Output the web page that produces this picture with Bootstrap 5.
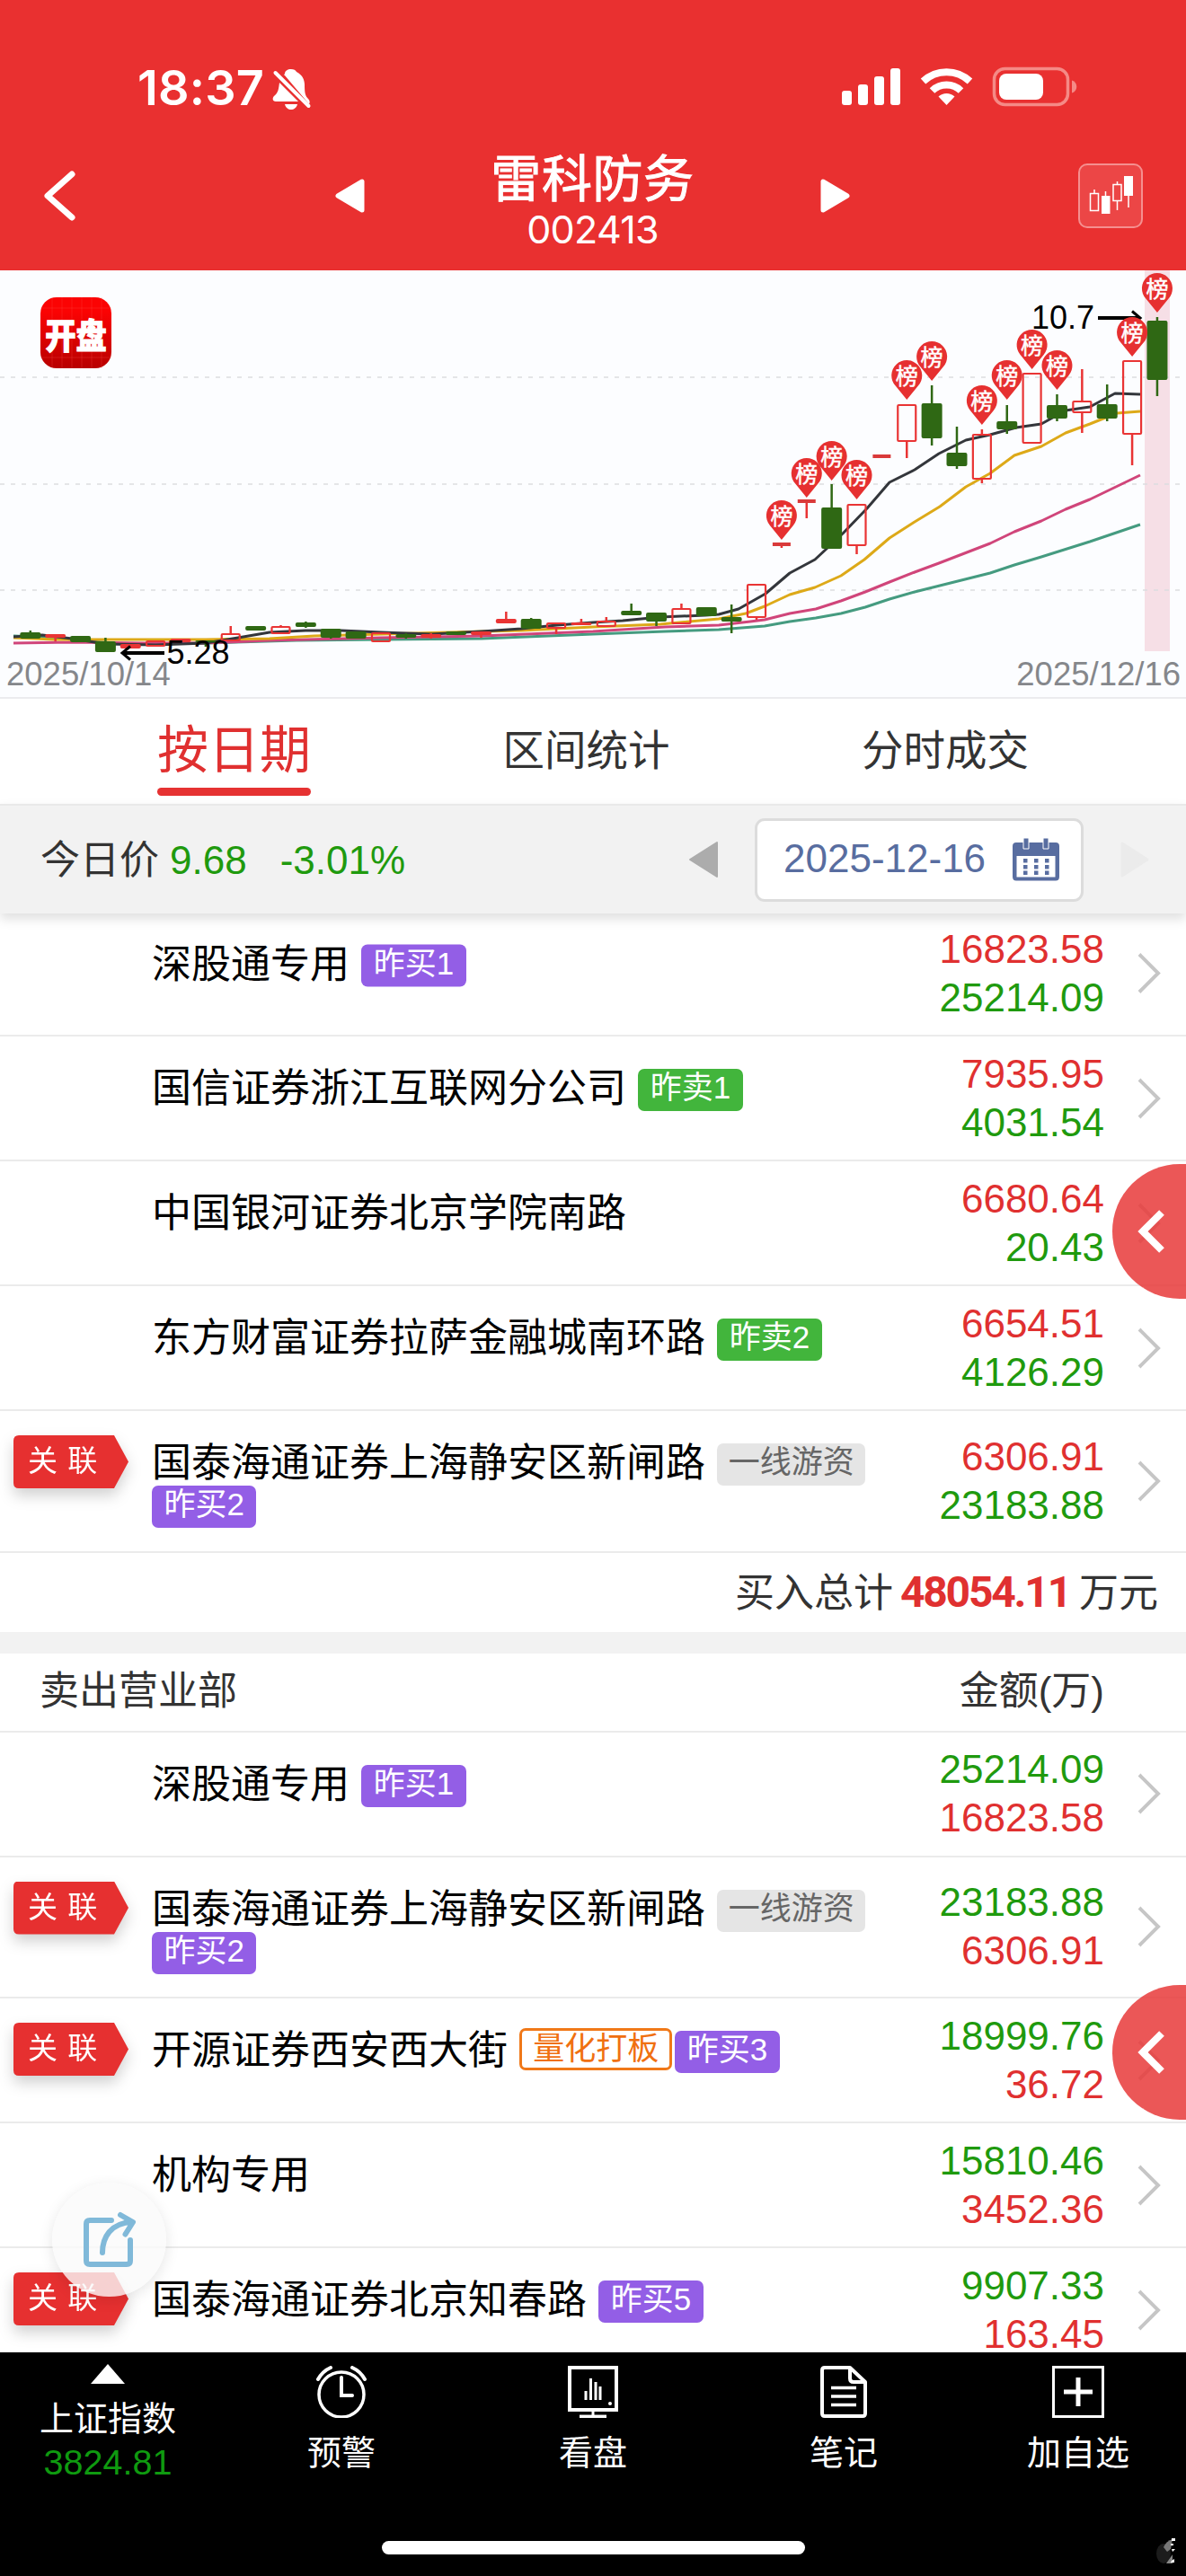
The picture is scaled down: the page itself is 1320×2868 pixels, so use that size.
<!DOCTYPE html>
<html lang="zh-CN">
<head>
<meta charset="utf-8">
<meta name="viewport" content="width=device-width, initial-scale=1">
<title>雷科防务 002413</title>
<link href="https://cdn.jsdelivr.net/npm/bootstrap@5.3.0/dist/css/bootstrap.min.css" rel="stylesheet">
<style>
  body { width: 1320px; height: 2868px; overflow: hidden; background: #fff; color: #000;
         font-family: "Liberation Sans", "Noto Sans CJK SC", sans-serif; font-size: 44px; line-height: 47px; }
  svg { display: block; flex: none; }
  .up { color: #e03030; }
  .down { color: #1f9a0e; }
  .top-area { height: 301px; background: #e93030; color: #fff; }
  .status-bar { height: 138px; padding: 68px 121px 0 153px; }
  .clock-text { font: 600 54px/60px Inter, sans-serif; letter-spacing: .2px; width: 146px; }
  .title-bar { height: 160px; padding: 0 48px; }
  .title-text { padding-top: 11px; }
  .stock-name { font-size: 56px; line-height: 62px; letter-spacing: .6px; -webkit-text-stroke: 1px #fff; }
  .stock-code { font-family: Inter, sans-serif; font-size: 43px; line-height: 48px; letter-spacing: -.7px; }
  .k-button { width: 72px; height: 72px; border: 2px solid #f58f8f; border-radius: 10px; background: #ec4646; }
  .chart-area { height: 475px; background: #fcfdff; }
  .tab-strip { height: 119px; border-top: 2px solid #ebebee; padding: 0 175px; }
  .tab-item { font-size: 46.5px; color: #333; height: 117px; line-height: 116px; }
  .tab-item.current { font-size: 57px; line-height: 114px; color: #e03030; width: 171px; text-align: center; position: relative; }
  .tab-item.current::after { content: ""; position: absolute; left: 0; right: 0; top: 99px; height: 9px; border-radius: 5px; background: #e63232; }
  .tool-strip { height: 122px; background: #f2f2f2; border-top: 2px solid #e9e9e9; padding: 0 41px 0 45px; position: relative; z-index: 2;
                box-shadow: 0 6px 12px rgba(0,0,0,.13); color: #333; }
  .date-box { width: 366px; height: 93px; border: 3px solid #dcdcdc; border-radius: 11px; background: #fff; color: #586da0; padding: 0 24px 4px 29px; }
  .seat-row { height: 139px; border-bottom: 2px solid #ebebeb; padding-right: 28px; }
  .seat-row.clipped-top { height: 137px; }
  .seat-row.clipped-top > * { transform: translateY(-1.5px); }
  .seat-row.two-line { height: 157.5px; }
  .flag-col { width: 169px; flex: none; padding: 27px 0 0 15px; }
  .flag-shape { width: 128px; height: 59px; filter: drop-shadow(0 8px 8px rgba(0,0,0,.18)); }
  .flag-face { width: 128px; height: 59px; background: #e63030; color: #fff; font-size: 33px; line-height: 58px; padding-left: 16px; word-spacing: 2px;
               clip-path: path("M6 0H112L128 29.5L112 59H6Q0 59 0 53V6Q0 0 6 0Z"); white-space: nowrap; }
  .seat-name { width: 830px; flex: none; padding-top: 36px; }
  .seat-name .nm { position: relative; top: -2px; margin-right: 1px; }
  .tag { display: inline-block; vertical-align: top; height: 47px; line-height: 42px; font-size: 35px; padding: 0 13.5px; border-radius: 7px; color: #fff; }
  .t-buy { background: #935ee6; }
  .t-sell { background: #42b53c; }
  .t-grey { background: #e5e5e5; color: #666; padding: 0 12.5px; }
  .t-quant { border: 3px solid #f07818; color: #f07010; line-height: 40px; padding: 0 12px; position: relative; top: -3px; margin-right: 3px; background: #fff; }
  .amounts { line-height: 54px; margin-right: 37px; }
  .sum-row { height: 88px; padding-right: 31px; color: #333; }
  .sum-row > span { position: relative; top: 1px; }
  .sum-row > .sum-num { font: 700 48px/60px Roboto, sans-serif; letter-spacing: -2.2px; margin: 0 10px 0 8px; top: 0; }
  .divider-band { height: 24px; background: #f2f2f2; }
  .list-head { height: 88px; border-bottom: 2px solid #ebebeb; padding: 0 91px 3px 44px; color: #333; }
  .list-area { height: 1602px; overflow: hidden; }
  .side-tab { position: absolute; right: 0; width: 82px; height: 150px; z-index: 3; }
  .share-fab { position: absolute; left: 58px; top: 2430px; width: 127px; height: 127px; border-radius: 50%; background: rgba(250,250,250,.8); box-shadow: 0 4px 16px rgba(0,0,0,.1); z-index: 3; }
  .dock { height: 249px; background: #000; color: #fff; font-size: 38px; line-height: 46px; position: relative; }
  .dock-item { flex: none; padding-top: 15px; }
  .dock-item .lbl { margin-top: 16px; }
  .home-line { width: 471px; height: 15px; border-radius: 8px; background: #fff; }
  .corner-mark { position: absolute; right: 12px; bottom: 12px; }
</style>
</head>
<body class="position-relative">

<header class="top-area">
  <div class="status-bar d-flex align-items-start">
    <div class="clock-text">18:37</div>
    <svg width="44" height="46" viewBox="304 75 44 46" class="ms-1 mt-2">
      <path fill="#fff" d="M325 76c3 0 5 1 6 3 6 3 9 8 9 15 0 9 1 12 4 15 2 2 2 4 1 6L318 83c-2-2-1 0 0-2 0-3 3-5 7-5zM312 91l21 21H308c-4 0-4-4-2-6 5-4 5-8 6-15zM318 115h14c-1 4-4 6-7 6s-6-2-7-6z"/>
      <path stroke="#fff" stroke-width="4" stroke-linecap="round" d="M307.500 80L344.500 117"/>
    </svg>
    <svg class="ms-auto" width="263" height="46" viewBox="936 74 263 46" fill="#fff" style="margin-top:6px">
      <rect x="937" y="101" width="11" height="16" rx="3"/><rect x="955" y="94" width="11" height="23" rx="3"/><rect x="973" y="85" width="11" height="32" rx="3"/><rect x="991" y="76" width="11" height="41" rx="3"/>
      <path d="M1053.500 117l-9-9.500a13 13 0 0 1 18 0z"/>
      <g fill="none" stroke="#fff" stroke-width="8"><path d="M1037.500 101a23 23 0 0 1 32 0"/><path d="M1027.500 90.500a38 38 0 0 1 52 0"/></g>
      <rect x="1106.500" y="76.500" width="82" height="40" rx="12" fill="none" stroke="#f58a86" stroke-width="3.500"/>
      <rect x="1112" y="82" width="49" height="29" rx="8"/><path fill="#f58a86" d="M1193 89.500c7 2 7 12 0 14z"/>
    </svg>
  </div>
  <div class="title-bar d-flex align-items-center">
    <svg width="36" height="58" viewBox="0 0 36 58"><path d="M32 5L5 29L32 53" fill="none" stroke="#fff" stroke-width="7" stroke-linecap="round" stroke-linejoin="round"/></svg>
    <svg width="33" height="40" viewBox="0 0 33 40" style="margin-left:289px"><path d="M3 20L30 4V36Z" fill="#fff" stroke="#fff" stroke-width="5" stroke-linejoin="round"/></svg>
    <div class="title-text flex-grow-1 text-center">
      <div class="stock-name">雷科防务</div>
      <div class="stock-code">002413</div>
    </div>
    <svg width="33" height="40" viewBox="0 0 33 40" style="margin-right:254px"><path d="M30 20L3 4V36Z" fill="#fff" stroke="#fff" stroke-width="5" stroke-linejoin="round"/></svg>
    <div class="k-button d-flex align-items-center justify-content-center">
      <svg width="50" height="44" viewBox="0 0 50 44" fill="#fff"><path fill="none" stroke="#fff" stroke-width="1.500" d="M2.500 19.500h9v19h-9zM28 9.500h9v18h-9zM7 15v4M19.500 17v6M32.500 6v4M32.500 27v11M45 20v15"/><path d="M15 22h9.500v20H15zM40 0h10v22H40z"/></svg>
    </div>
  </div>
</header>

<main>
<section class="chart-area"><svg id="kline" width="1320" height="475" viewBox="0 1 1320 475"></svg></section>

<nav class="tab-strip d-flex justify-content-between">
  <div class="tab-item current">按日期</div><div class="tab-item">区间统计</div><div class="tab-item">分时成交</div>
</nav>

<section class="tool-strip d-flex align-items-center">
  <div>今日价</div><div class="down" style="margin-left:12px">9.68</div><div class="down" style="margin-left:37px">-3.01%</div>
  <svg class="ms-auto" width="34" height="42" viewBox="0 0 34 42"><path d="M2 21L32 2V40Z" fill="#acacac" stroke="#acacac" stroke-width="2" stroke-linejoin="round"/></svg>
  <div class="date-box d-flex align-items-center justify-content-between" style="margin:0 41px 0 40px">
    <span>2025-12-16</span>
    <svg width="52" height="48" viewBox="0 0 52 48" fill="#586da0" class="mt-1"><path fill-rule="evenodd" d="M4 5H48Q52 5 52 9V43Q52 47.500 48 47.500H4Q0 47.500 0 43V9Q0 5 4 5ZM4.500 20V43.500H47.500V20Z"/><path d="M12 0h6v12h-6zM34 0h6v12h-6z" stroke="#fff" stroke-width="1"/><path d="M12 23h4.500v4.500H12zM24 23h4.500v4.500H24zM36 23h4.500v4.500H36zM12 30h4.500v4.500H12zM24 30h4.500v4.500H24zM36 30h4.500v4.500H36zM12 36.500h4.500V41H12zM24 36.500h4.500V41H24zM36 36.500h4.500V41H36z"/></svg>
  </div>
  <svg width="32" height="40" viewBox="0 0 32 40"><path d="M30 20L2 2V38Z" fill="#ebebeb" stroke="#ebebeb" stroke-width="3" stroke-linejoin="round"/></svg>
</section>

<div class="list-area">
  <div class="seat-row clipped-top d-flex"><div class="flag-col"></div><div class="seat-name"><span class="nm">深股通专用</span> <span class="tag t-buy">昨买1</span></div><div class="amounts ms-auto text-end align-self-center"><div class="up">16823.58</div><div class="down">25214.09</div></div><svg class="align-self-center" width="26" height="46" viewBox="0 0 26 46"><path d="M2 2L23 23L2 44" fill="none" stroke="#c6c6c6" stroke-width="4"/></svg></div>
  <div class="seat-row d-flex"><div class="flag-col"></div><div class="seat-name"><span class="nm">国信证券浙江互联网分公司</span> <span class="tag t-sell">昨卖1</span></div><div class="amounts ms-auto text-end align-self-center"><div class="up">7935.95</div><div class="down">4031.54</div></div><svg class="align-self-center" width="26" height="46" viewBox="0 0 26 46"><path d="M2 2L23 23L2 44" fill="none" stroke="#c6c6c6" stroke-width="4"/></svg></div>
  <div class="seat-row d-flex"><div class="flag-col"></div><div class="seat-name"><span class="nm">中国银河证券北京学院南路</span></div><div class="amounts ms-auto text-end align-self-center"><div class="up">6680.64</div><div class="down">20.43</div></div><svg class="align-self-center" width="26" height="46" viewBox="0 0 26 46"><path d="M2 2L23 23L2 44" fill="none" stroke="#c6c6c6" stroke-width="4"/></svg></div>
  <div class="seat-row d-flex"><div class="flag-col"></div><div class="seat-name"><span class="nm">东方财富证券拉萨金融城南环路</span> <span class="tag t-sell">昨卖2</span></div><div class="amounts ms-auto text-end align-self-center"><div class="up">6654.51</div><div class="down">4126.29</div></div><svg class="align-self-center" width="26" height="46" viewBox="0 0 26 46"><path d="M2 2L23 23L2 44" fill="none" stroke="#c6c6c6" stroke-width="4"/></svg></div>
  <div class="seat-row two-line d-flex"><div class="flag-col"><div class="flag-shape"><div class="flag-face">关 联</div></div></div><div class="seat-name"><span class="nm">国泰海通证券上海静安区新闸路</span> <span class="tag t-grey">一线游资</span> <span class="tag t-buy">昨买2</span></div><div class="amounts ms-auto text-end align-self-center"><div class="up">6306.91</div><div class="down">23183.88</div></div><svg class="align-self-center" width="26" height="46" viewBox="0 0 26 46"><path d="M2 2L23 23L2 44" fill="none" stroke="#c6c6c6" stroke-width="4"/></svg></div>
  <div class="sum-row d-flex align-items-center justify-content-end"><span>买入总计</span><span class="up sum-num">48054.11</span><span>万元</span></div>
  <div class="divider-band"></div>
  <div class="list-head d-flex align-items-center justify-content-between"><span>卖出营业部</span><span>金额(万)</span></div>
  <div class="seat-row d-flex"><div class="flag-col"></div><div class="seat-name"><span class="nm">深股通专用</span> <span class="tag t-buy">昨买1</span></div><div class="amounts ms-auto text-end align-self-center"><div class="down">25214.09</div><div class="up">16823.58</div></div><svg class="align-self-center" width="26" height="46" viewBox="0 0 26 46"><path d="M2 2L23 23L2 44" fill="none" stroke="#c6c6c6" stroke-width="4"/></svg></div>
  <div class="seat-row two-line d-flex"><div class="flag-col"><div class="flag-shape"><div class="flag-face">关 联</div></div></div><div class="seat-name"><span class="nm">国泰海通证券上海静安区新闸路</span> <span class="tag t-grey">一线游资</span> <span class="tag t-buy">昨买2</span></div><div class="amounts ms-auto text-end align-self-center"><div class="down">23183.88</div><div class="up">6306.91</div></div><svg class="align-self-center" width="26" height="46" viewBox="0 0 26 46"><path d="M2 2L23 23L2 44" fill="none" stroke="#c6c6c6" stroke-width="4"/></svg></div>
  <div class="seat-row d-flex"><div class="flag-col"><div class="flag-shape"><div class="flag-face">关 联</div></div></div><div class="seat-name"><span class="nm">开源证券西安西大街</span> <span class="tag t-quant">量化打板</span><span class="tag t-buy">昨买3</span></div><div class="amounts ms-auto text-end align-self-center"><div class="down">18999.76</div><div class="up">36.72</div></div><svg class="align-self-center" width="26" height="46" viewBox="0 0 26 46"><path d="M2 2L23 23L2 44" fill="none" stroke="#c6c6c6" stroke-width="4"/></svg></div>
  <div class="seat-row d-flex"><div class="flag-col"></div><div class="seat-name"><span class="nm">机构专用</span></div><div class="amounts ms-auto text-end align-self-center"><div class="down">15810.46</div><div class="up">3452.36</div></div><svg class="align-self-center" width="26" height="46" viewBox="0 0 26 46"><path d="M2 2L23 23L2 44" fill="none" stroke="#c6c6c6" stroke-width="4"/></svg></div>
  <div class="seat-row d-flex"><div class="flag-col"><div class="flag-shape"><div class="flag-face">关 联</div></div></div><div class="seat-name"><span class="nm">国泰海通证券北京知春路</span> <span class="tag t-buy">昨买5</span></div><div class="amounts ms-auto text-end align-self-center"><div class="down">9907.33</div><div class="up">163.45</div></div><svg class="align-self-center" width="26" height="46" viewBox="0 0 26 46"><path d="M2 2L23 23L2 44" fill="none" stroke="#c6c6c6" stroke-width="4"/></svg></div>
</div>
</main>

<svg class="side-tab" style="top:1296px" viewBox="0 0 82 150"><path d="M82 0H75A75 75 0 0 0 75 150H82Z" fill="#e83a3a" fill-opacity=".85"/><path d="M55 54L34 75L55 96" fill="none" stroke="#fff" stroke-width="8"/></svg>
<svg class="side-tab" style="top:2210px" viewBox="0 0 82 150"><path d="M82 0H75A75 75 0 0 0 75 150H82Z" fill="#e83a3a" fill-opacity=".85"/><path d="M55 54L34 75L55 96" fill="none" stroke="#fff" stroke-width="8"/></svg>

<div class="share-fab d-flex align-items-center justify-content-center">
  <svg width="62" height="64" viewBox="92 2459 62 64" fill="none" stroke="#80b9d9" stroke-width="6" stroke-linecap="round" stroke-linejoin="round"><path d="M125 2469H101Q97 2469 97 2473V2514Q97 2518 101 2518H142Q146 2518 146 2514V2491M115 2505C115 2488 124 2472 148 2471M135 2463L149 2471L140.500 2484.500"/></svg>
</div>

<footer class="dock">
  <div class="d-flex" style="padding-left:44px;height:210px">
    <div class="dock-item text-center" style="padding-top:13px;margin-right:146px"><svg class="mx-auto" width="38" height="22" viewBox="0 0 38 22"><path d="M19 0L38 22H0Z" fill="#fff"/></svg><div style="margin-top:16px">上证指数</div><div style="color:#0f9a10;font-size:39.500px;line-height:50px">3824.81</div></div>
    <div class="dock-item text-center" style="margin-right:204px"><svg class="mx-auto" width="58" height="58" viewBox="0 0 58 58" fill="none" stroke="#fff"><circle cx="29" cy="32" r="25" stroke-width="3.500"/><path stroke-width="4" stroke-linecap="round" d="M29 13V33H41"/><path stroke-width="4" stroke-linecap="round" d="M3 15Q8 6 17 2M55 15Q50 6 41 2"/></svg><div class="lbl">预警</div></div>
    <div class="dock-item text-center" style="margin-right:203px"><svg class="mx-auto" width="58" height="58" viewBox="0 0 58 58" fill="none" stroke="#fff"><path stroke-width="4" d="M3 2H55V49H3Z"/><path stroke-width="3" d="M21 28V38M26.500 14V38M32 18V38M37 23V38M29 50V56"/><path stroke-width="3.500" d="M14 56.300H44"/><circle cx="48" cy="42" r="2" fill="#fff" stroke="none"/></svg><div class="lbl">看盘</div></div>
    <div class="dock-item text-center" style="margin-right:166px"><svg class="mx-auto" width="58" height="58" viewBox="0 0 58 58" fill="none" stroke="#fff" stroke-linejoin="round"><path stroke-width="4" d="M8 2H36L53 18V53Q53 56 50 56H8Q5 56 5 53V5Q5 2 8 2M36 2V14Q36 18 40 18H53"/><path stroke-width="3.500" d="M15 24.500H43M15 34H43M15 43.500H43"/></svg><div class="lbl">笔记</div></div>
    <div class="dock-item text-center"><svg class="mx-auto" width="58" height="58" viewBox="0 0 58 58" fill="none" stroke="#fff"><path stroke-width="3" d="M1.500 1.500H56.500V56.500H1.500Z"/><path stroke-width="5" d="M13 29H45M29 13V45"/></svg><div class="lbl">加自选</div></div>
  </div>
  <div class="home-line mx-auto"></div>
  <svg class="corner-mark" width="22" height="32" viewBox="0 0 22 32"><ellipse cx="9" cy="19" rx="8" ry="11" fill="#1c1c1c"/><path d="M9 12Q12 5 19 3L17 14L13 17Z" fill="#777"/><path d="M12 30L19 20V30Z" fill="#888"/><path d="M18 2h4v3h-4zM17 8h3v2h-3zM18 14h4l-3 3zM18 27l3-2v4h-4z" fill="#fff"/></svg>
</footer>

<script src="https://cdn.jsdelivr.net/npm/bootstrap@5.3.0/dist/js/bootstrap.bundle.min.js"></script>
<script>
  // kind (g: down, h: up hollow, f: up thin, l: limit line), body top, body bottom, high, low, pin tip
  const bars = [
    ['g',404,411,402,411],['f',406,410,406,414],['g',408,415,408,415],['g',414,426,410,426],['f',417,422,417,422],['h',413,419,413,419],
    ['f',411,415,411,415],['g',413,415,413,420],['h',405,413,397,413],['g',397,402,397,402],['h',397,405,396,405],['g',393,398,392,399],
    ['g',400,410,400,411],['g',403,411,403,411],['h',404,414,404,414],['g',406,410,405,411],['f',406,410,405,411],['g',403,407,403,407],
    ['f',403,407,403,410],['f',389,394,381,394],['g',389,400,388,400],['h',393,399,393,406],['f',393,396,389,396],['h',391,397,387,397],
    ['g',380,385,372,385],['g',382,392,382,397],['h',377,394,372,394],['g',376,386,376,386],['g',387,392,373,405],['h',350,387,350,390],
    ['l',306,306,306,310,300],['l',258,258,258,277,253],['g',265,311,239,311,234],['h',261,307,261,317,255],['l',208,208,208,208],
    ['h',150,191,150,210,144],['g',149,188,129,196,123],['g',204,219,175,222],['h',183,233,178,238,172],['g',169,178,151,183,144],
    ['h',115,193,115,193,110],['g',151,166,139,169,133],['h',146,159,111,182],['g',150,166,128,169],['h',101,183,101,218,96],['g',57,123,53,141,47]
  ];
  const averages = [
    ['#459b80','15,408 60,410 90,413 140,417 229,416 330,413 424,412 536,411 660,406 740,403 800,401 851,397 879,392 908,388 936,383 963,376 990,367 1018,359 1046,352 1102,338 1129,329 1159,320 1213,303 1269,284'],
    ['#d0457a','15,416 80,415 160,416 229,416 300,413 424,410 536,408 660,403 740,398 800,396 835,392 851,390 879,383 908,378 936,369 963,359 990,348 1018,337 1045,327 1102,305 1129,292 1159,280 1186,267 1213,256 1269,229'],
    ['#dda918','15,410 60,412 140,412 229,412 300,411 350,408 424,406 500,404 580,402 660,398 735,395 800,389 830,383 851,375 879,362 907,354 936,341 962,323 990,299 1018,281 1046,264 1075,242 1102,227 1129,207 1159,197 1186,182 1213,172 1243,160 1269,158'],
    ['#33363b','15,409 47,407 80,411 118,417 173,418 229,416 265,410 300,404 340,402 380,402 424,404 480,406 536,403 580,400 620,396 660,393 693,391 735,387 785,385 800,384 822,378 852,361 879,338 907,323 921,310 938,294 965,266 990,237 1018,223 1045,205 1075,190 1102,184 1131,176 1159,172 1186,157 1213,153 1241,138 1269,139']
  ];
  let out = '<rect x="1274" y="1" width="28" height="424" fill="#f6dfe6"/>';
  [420, 539, 657].forEach(y => out += `<path d="M0 ${y-300}H1320" stroke="#dcdde0" stroke-width="1.500" stroke-dasharray="5 7"/>`);
  averages.forEach(a => out += `<polyline points="${a[1]}" fill="none" stroke="${a[0]}" stroke-width="3" stroke-linejoin="round"/>`);
  let pins = '';
  bars.forEach((b, i) => {
    const x = 33.8 + 27.87 * i, c = b[0] === 'g' ? '#2f6814' : '#e93434';
    if (b[3] < b[1]) out += `<path d="M${x} ${b[3]}V${b[1]}" stroke="${c}" stroke-width="2.500"/>`;
    if (b[4] > b[2]) out += `<path d="M${x} ${b[2]}V${b[4]}" stroke="${c}" stroke-width="2.500"/>`;
    if (b[0] === 'l') out += `<rect x="${x-10}" y="${b[1]-2}" width="20" height="4" fill="#d93a3a"/>`;
    else if (b[0] === 'h') out += `<rect x="${x-10}" y="${b[1]+1}" width="20" height="${b[2]-b[1]-1}" rx="1" fill="none" stroke="${c}" stroke-width="2.200"/>`;
    else out += `<rect x="${x-11.5}" y="${b[1]}" width="23" height="${b[2]-b[1]}" rx="2" fill="${c}"/>`;
    if (b[5]) {
      const y = b[5];
      pins += `<path d="M${x} ${y+1}L${x-13} ${y-15}A17 17 0 1 1 ${x+13} ${y-15}Z" fill="#e63030"/>` +
              `<text x="${x}" y="${y-16}" font-size="25" text-anchor="middle" fill="#fff" stroke="#fff" stroke-width=".5">榜</text>`;
    }
  });
  out += '<g fill="none" stroke="#000" stroke-width="4"><path d="M136 427H183M1222 54H1268"/><path stroke-width="3" d="M145 419.500L136 427L145 434.500M1260 46.500L1269 54L1260 61.500"/></g>' +
    '<text x="185.500" y="438.500" font-size="36">5.28</text><text x="1218" y="66" font-size="36" text-anchor="end">10.7</text>' + pins +
    '<text x="7" y="463" font-size="36.500" fill="#85878b">2025/10/14</text><text x="1314" y="463" font-size="36.500" text-anchor="end" fill="#85878b">2025/12/16</text>' +
    '<defs><linearGradient id="lg" x2="0" y2="1"><stop offset=".2" stop-color="#fb0303"/><stop offset="1" stop-color="#b80000"/></linearGradient></defs>' +
    '<rect x="45" y="31" width="79" height="79" rx="18" fill="url(#lg)"/><path d="M45 43H124M45 98H124M58 31V110M69 31V110M80 31V110M91 31V110M102 31V110M113 31V110" stroke="#ff5a50" stroke-opacity=".25"/>' +
    '<text x="84.500" y="88" font-size="39" transform="translate(84.500 0) scale(.88 1) translate(-84.500 0)" font-weight="900" text-anchor="middle" fill="#fff" stroke="#fff" stroke-width="1">开盘</text>';
  document.getElementById('kline').innerHTML = out;
</script>
</body>
</html>
